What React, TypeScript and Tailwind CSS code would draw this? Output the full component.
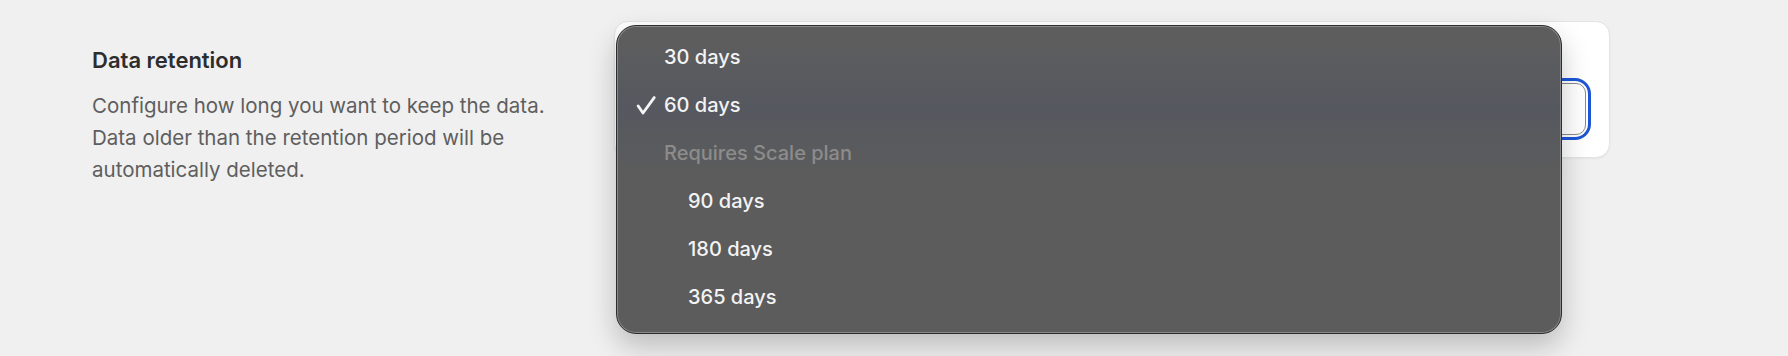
import React from "react";

const options = [
  { label: "30 days", checked: false, indent: false, disabled: false },
  { label: "60 days", checked: true, indent: false, disabled: false },
  { label: "Requires Scale plan", checked: false, indent: false, disabled: true },
  { label: "90 days", checked: false, indent: true, disabled: false },
  { label: "180 days", checked: false, indent: true, disabled: false },
  { label: "365 days", checked: false, indent: true, disabled: false },
];

const CheckMark = () => (
  <svg width="20" height="19" viewBox="0 0 20 19" fill="none" className="block">
    <path
      d="M2.2 10 L7 17 L18.2 1.6"
      stroke="#f4f4f4"
      strokeWidth="2.8"
      strokeLinecap="round"
      strokeLinejoin="round"
    />
  </svg>
);

const RetentionMenu = () => (
  <div className="absolute left-[616px] top-[25px] w-[946px] h-[309px] rounded-[20px] border border-[#2c2c2c] bg-linear-to-b from-[#5d5d5e] from-[6%] via-[#55585f] via-[27%] to-[#5c5c5c] to-[48%] shadow-[inset_0_0_0_1px_rgba(255,255,255,0.28),0_12px_28px_rgba(0,0,0,0.22)] pt-[7px]">
    {options.map((opt) => (
      <div key={opt.label} className="relative flex items-center h-[48px]">
        {opt.checked && (
          <span className="absolute left-[19px] top-[15px]">
            <CheckMark />
          </span>
        )}
        <span
          className={
            (opt.indent ? "pl-[71px] " : "pl-[47px] ") +
            (opt.disabled ? "text-[#8c8c8c]" : "text-[#f3f3f3]")
          }
        >
          {opt.label}
        </span>
      </div>
    ))}
  </div>
);

export default function App() {
  return (
    <div
      className="relative h-[356px] w-full bg-[#f0f0f0] overflow-hidden"
      style={{ fontFamily: "Inter, 'Noto Sans', sans-serif" }}
    >
      <div className="flex pt-[21px] pl-[92px] gap-[32px]">
        <div className="w-[490px] pt-[25px]">
          <h3 className="text-[22px] leading-[28px] font-semibold text-[#2d2d2d]">
            Data retention
          </h3>
          <p className="mt-4 max-w-[480px] text-[20.5px] leading-[32px] text-[#5e5e5e]">
            Configure how long you want to keep the data. Data older than the
            retention period will be automatically deleted.
          </p>
        </div>

        {/* select field sits under the open menu */}
        <div className="w-[996px] h-[137px] rounded-[14px] bg-white border border-[#e4e4e4] shadow-[0_1px_2px_rgba(0,0,0,0.05)] px-[21px] pt-[59px]">
          <div className="h-[56px] rounded-[13px] ring-[3px] ring-[#1d56d6] p-[2px]">
            <div className="h-full rounded-[10px] border border-[#8a8a8a] bg-white" />
          </div>
        </div>
      </div>

      <div className="text-[20px] font-medium leading-[24px]">
        <RetentionMenu />
      </div>
    </div>
  );
}
